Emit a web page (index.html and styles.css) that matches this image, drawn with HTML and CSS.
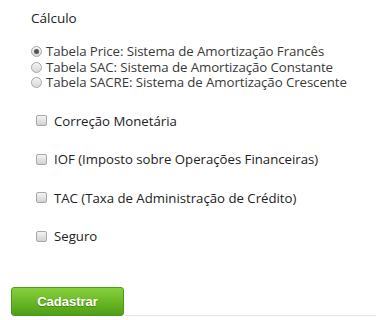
FILE: index.html
```html
<!DOCTYPE html>
<html lang="pt">
<head>
<meta charset="utf-8">
<link rel="stylesheet" href="styles.css">
</head>
<body>
<form class="form">
  <div class="section">
    <div class="title">Cálculo</div>
    <div class="radios">
      <label class="radio-row"><span class="radio checked"></span>Tabela Price: Sistema de Amortização Francês</label>
      <label class="radio-row"><span class="radio"></span>Tabela SAC: Sistema de Amortização Constante</label>
      <label class="radio-row"><span class="radio"></span>Tabela SACRE: Sistema de Amortização Crescente</label>
    </div>
    <div class="checks">
      <label class="check-row"><span class="check"></span>Correção Monetária</label>
      <label class="check-row"><span class="check"></span>IOF (Imposto sobre Operações Financeiras)</label>
      <label class="check-row"><span class="check"></span>TAC (Taxa de Administração de Crédito)</label>
      <label class="check-row"><span class="check"></span>Seguro</label>
    </div>
  </div>
  <div class="footer">
    <button type="button" class="btn">Cadastrar</button>
    <div class="rule"></div>
  </div>
</form>
</body>
</html>
```

FILE: styles.css
```css
html, body {
  margin: 0;
  padding: 0;
  background: #ffffff;
}
body {
  font-family: "Open Sans", "Noto Sans", sans-serif;
  color: #222222;
}
.form {
  width: 376px;
  height: 320px;
  display: flex;
  flex-direction: column;
}
.section {
  padding-left: 31px;
  padding-top: 9px;
}
.title {
  font-size: 13.5px;
  line-height: 18px;
  color: #222;
}
.radios {
  margin-top: 17px;
  display: flex;
  flex-direction: column;
}
.radio-row {
  display: flex;
  align-items: center;
  font-size: 13.3px;
  line-height: 15.5px;
  height: 15.5px;
  color: #3a3a3a;
  white-space: nowrap;
  letter-spacing: -0.1px;
}
.radio {
  width: 11px;
  height: 11px;
  border-radius: 50%;
  border: 1px solid #a8a8a8;
  background: linear-gradient(#f4f4f4, #d8d8d8);
  box-sizing: border-box;
  margin-right: 4px;
  flex: none;
  position: relative;
}
.radio.checked::after {
  content: "";
  position: absolute;
  left: 2px;
  top: 2px;
  width: 5px;
  height: 5px;
  border-radius: 50%;
  background: #555;
}
.checks {
  margin-top: 20px;
  padding-left: 5px;
  display: flex;
  flex-direction: column;
  gap: 18.5px;
}
.check-row {
  display: flex;
  align-items: center;
  font-size: 13.2px;
  line-height: 20px;
  height: 20px;
  color: #222;
  white-space: nowrap;
}
.check {
  width: 11px;
  height: 11px;
  border: 1px solid #a8a8a8;
  border-radius: 2px;
  background: linear-gradient(#f4f4f4, #d2d2d2);
  box-sizing: border-box;
  margin-right: 7px;
  flex: none;
}
.footer {
  margin-top: auto;
  padding-left: 11px;
  display: flex;
  align-items: flex-end;
  height: 33px;
}
.btn {
  width: 113px;
  height: 29px;
  border: 1px solid #4e9a16;
  border-radius: 3px;
  background: linear-gradient(#86d13a, #4f9e16);
  color: #ffffff;
  font-family: "Liberation Sans", Arial, sans-serif;
  font-weight: bold;
  font-size: 13px;
  text-shadow: 0 1px 1px rgba(0,0,0,0.25);
  padding: 0;
  margin: 0 0 4px 0;
  flex: none;
}
.rule {
  flex: 1;
  border-bottom: 1px solid #e6e6e6;
  margin-bottom: 4px;
}
```
